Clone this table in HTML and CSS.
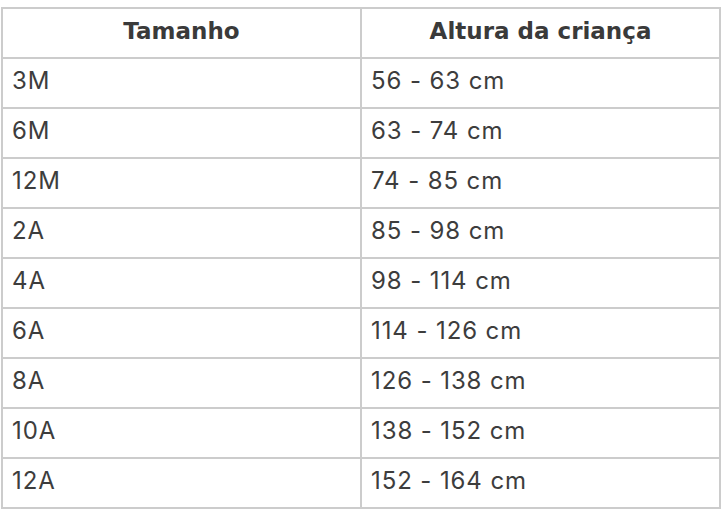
FILE: index.html
```html
<!DOCTYPE html>
<html lang="pt">
<head>
<meta charset="utf-8">
<link rel="stylesheet" href="styles.css">
</head>
<body>
<table class="size-table">
  <thead>
    <tr><th>Tamanho</th><th>Altura da criança</th></tr>
  </thead>
  <tbody>
    <tr><td>3M</td><td>56 - 63 cm</td></tr>
    <tr><td>6M</td><td>63 - 74 cm</td></tr>
    <tr><td>12M</td><td>74 - 85 cm</td></tr>
    <tr><td>2A</td><td>85 - 98 cm</td></tr>
    <tr><td>4A</td><td>98 - 114 cm</td></tr>
    <tr><td>6A</td><td>114 - 126 cm</td></tr>
    <tr><td>8A</td><td>126 - 138 cm</td></tr>
    <tr><td>10A</td><td>138 - 152 cm</td></tr>
    <tr><td>12A</td><td>152 - 164 cm</td></tr>
  </tbody>
</table>
</body>
</html>
```
FILE: styles.css
```css
html, body {
  margin: 0;
  background: #ffffff;
}
body {
  padding: 7px 0 0 1px;
  font-family: Inter, "Noto Sans", sans-serif;
  color: #3d3d3d;
}
.size-table {
  width: 720px;
  border-collapse: collapse;
  table-layout: fixed;
}
.size-table th,
.size-table td {
  border: 2px solid #cccccc;
  padding: 0 9px 5px;
  box-sizing: border-box;
  height: 50px;
}
.size-table th {
  font-family: "DejaVu Sans", Inter, sans-serif;
  font-weight: 700;
  font-size: 23px;
  text-align: center;
  color: #3a3a3a;
}
.size-table td {
  font-size: 24px;
  letter-spacing: 0.9px;
  text-align: left;
}
```
